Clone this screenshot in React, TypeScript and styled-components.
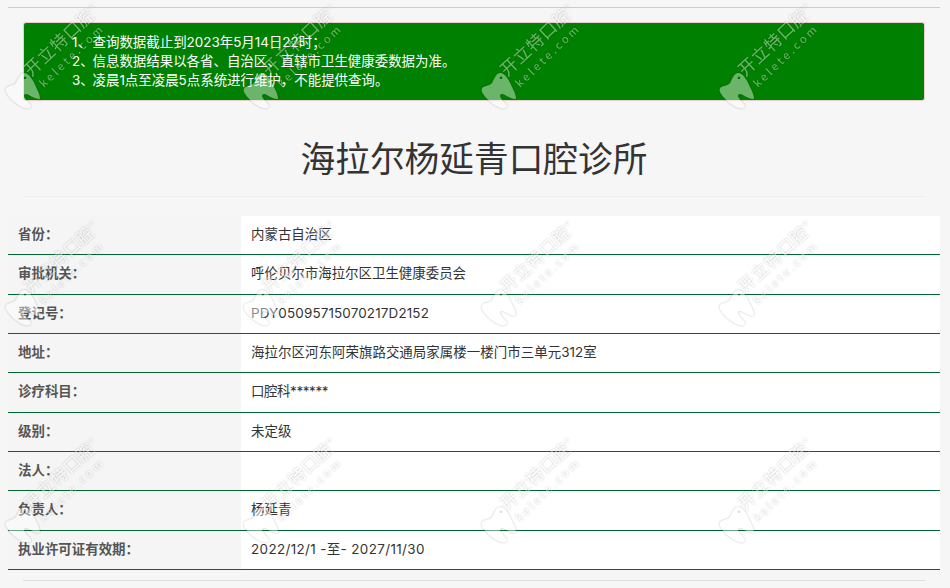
import styled, { createGlobalStyle } from "styled-components";

const GlobalStyle = createGlobalStyle`
    html, body {
        margin: 0;
        padding: 0;
        background: #f6f6f6;
    }
    body {
        font-family: Inter, "Noto Sans CJK SC", sans-serif;
        font-size: 13.44px;
        color: #333;
    }
`;

const Page = styled.div`
    position: relative;
    width: 950px;
    height: 588px;
    overflow: hidden;
    box-sizing: border-box;
    padding: 7px 10px 0 8px;
`;

const TopRule = styled.hr`
    margin: 0;
    border: none;
    border-top: 1px solid #ccc;
`;

const Inner = styled.div`
    margin: 0 15px;
`;

const Alert = styled.div`
    box-sizing: border-box;
    height: 79px;
    margin-top: 14px;
    padding: 10px 0 0 48px;
    background: #008000;
    border: 1px solid #ebccd1;
    border-radius: 3px;
    color: #fff;
    line-height: 19px;
`;

const Ordinal = styled.span`
    display: inline-block;
    width: 20.5px;
    white-space: nowrap;
`;

const Title = styled.h1`
    margin: 0;
    height: 95px;
    line-height: 116px;
    text-align: center;
    font-size: 34.7px;
    font-weight: 400;
    color: #333;
    border-bottom: 1px solid #eee;
`;

const Table = styled.div`
    margin-top: 19px;
    background: #fff;
`;

const Row = styled.div`
    display: grid;
    grid-template-columns: 233px 1fr;
    box-sizing: border-box;
    height: 39.33px;
    border-bottom: 1px solid #006633;
`;

const Label = styled.div`
    padding-left: 10px;
    background: #f5f5f5;
    font-weight: 700;
    color: #555;
    line-height: 36px;
`;

const Value = styled.div<{ $spacing?: number }>`
    padding-left: 10px;
    color: #333;
    line-height: 36px;
    letter-spacing: ${(p) => p.$spacing ?? 0}px;
`;

const BottomRule = styled.hr`
    margin: 10px 15px 0;
    border: none;
    border-top: 1px solid #ddd;
`;

const WatermarkLayer = styled.div`
    position: absolute;
    inset: 0 0 0 -4px;
    pointer-events: none;
    display: grid;
    grid-template-columns: repeat(4, 238px);
    grid-auto-rows: 217px;
`;

const Tile = styled.svg`
    width: 120px;
    height: 120px;
    overflow: visible;
    opacity: 0.42;
    filter: drop-shadow(0 0 0.8px rgba(0, 0, 0, 0.55));
`;

const TileText = styled.text<{ $size: number; $spacing: number }>`
    font-family: "Noto Sans CJK SC", sans-serif;
    font-size: ${(p) => p.$size}px;
    letter-spacing: ${(p) => p.$spacing}px;
    fill: #fff;
`;

function Watermark() {
    return (
        <Tile viewBox="0 0 120 120">
            <path
                fill="#fff"
                fillRule="evenodd"
                d="M28 73C33 73 37 80 40 87C42 91 44 95 44 99C40 99 36 97 33 95C30 93 28 94 28 96C29 100 34 103 35 106C35 109 30 109 26 107C20 104 13 98 10 92C9 89 10 87 14 86C18 85 20 84 21 81C23 77 25 73 28 73ZM29 76.5a1.3 1.3 0 1 0 0.01 0Z"
            />
            <TileText $size={17} $spacing={0.8} transform="translate(35 77) rotate(-43)">
                开立特口腔
            </TileText>
            <TileText $size={11} $spacing={2.9} transform="translate(48 88) rotate(-44)">
                kelete.com
            </TileText>
            <circle cx="95" cy="6.5" r="1.6" fill="none" stroke="#fff" strokeWidth="0.7" />
        </Tile>
    );
}

const notices = [
    "查询数据截止到2023年5月14日22时；",
    "信息数据结果以各省、自治区、直辖市卫生健康委数据为准。",
    "凌晨1点至凌晨5点系统进行维护，不能提供查询。",
];

const rows: { label: string; value: string; spacing?: number }[] = [
    { label: "省份：", value: "内蒙古自治区" },
    { label: "审批机关：", value: "呼伦贝尔市海拉尔区卫生健康委员会" },
    { label: "登记号：", value: "PDY05095715070217D2152", spacing: 0.14 },
    { label: "地址：", value: "海拉尔区河东阿荣旗路交通局家属楼一楼门市三单元312室", spacing: 0.05 },
    { label: "诊疗科目：", value: "口腔科******", spacing: -0.4 },
    { label: "级别：", value: "未定级" },
    { label: "法人：", value: "" },
    { label: "负责人：", value: "杨延青" },
    { label: "执业许可证有效期：", value: "2022/12/1 -至- 2027/11/30", spacing: 0.36 },
];

export default function App() {
    return (
        <Page>
            <GlobalStyle />
            <TopRule />
            <Inner>
                <Alert>
                    {notices.map((line, i) => (
                        <div key={line}>
                            <Ordinal>{i + 1}、</Ordinal>
                            {line}
                        </div>
                    ))}
                </Alert>
                <Title>海拉尔杨延青口腔诊所</Title>
            </Inner>
            <Table>
                {rows.map((row) => (
                    <Row key={row.label}>
                        <Label>{row.label}</Label>
                        <Value $spacing={row.spacing}>{row.value}</Value>
                    </Row>
                ))}
            </Table>
            <BottomRule />
            <WatermarkLayer>
                {Array.from({ length: 12 }, (_, i) => (
                    <Watermark key={i} />
                ))}
            </WatermarkLayer>
        </Page>
    );
}
